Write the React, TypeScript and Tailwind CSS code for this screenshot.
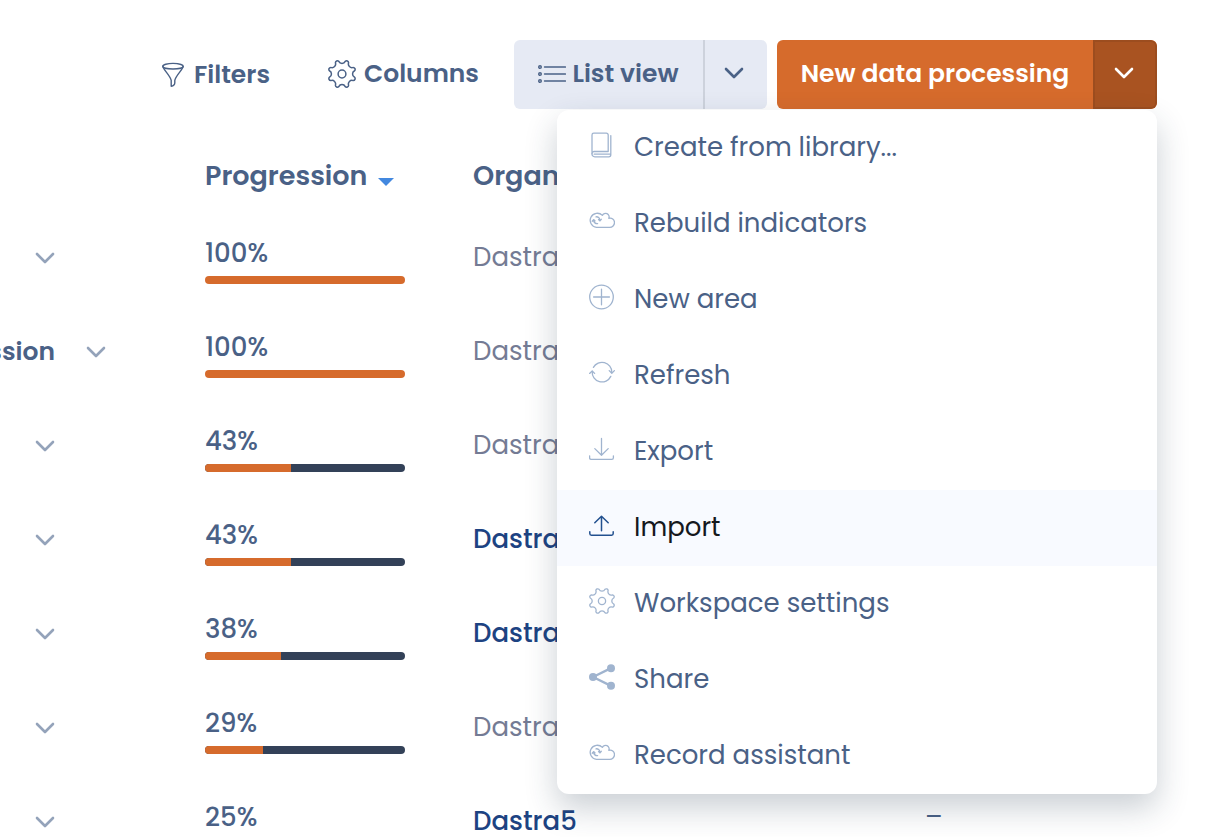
import React from "react";

type IconProps = { className?: string };

function gearOutline(center: number, radius: number, notch: number) {
  const point = (deg: number) => {
    const a = (deg * Math.PI) / 180;
    return `${(center + radius * Math.cos(a)).toFixed(2)} ${(center + radius * Math.sin(a)).toFixed(2)}`;
  };
  let d = "";
  for (let i = 0; i < 8; i++) {
    const a = 22.5 + i * 45;
    d += `${i === 0 ? "M" : "L"}${point(a - 8)} A2 2 0 0 1 ${point(a + 8)} A${notch} ${notch} 0 0 0 ${point(a + 37)} `;
  }
  return d + "Z";
}

const GEAR = gearOutline(14, 13, 3.6);

function Svg({ className = "", size = 26, box = "0 0 26 26", stroke = 1.3, children }: IconProps & { size?: number; box?: string; stroke?: number; children: React.ReactNode }) {
  return (
    <svg className={`shrink-0 ${className}`} width={size} height={size} viewBox={box} fill="none" stroke="currentColor" strokeWidth={stroke} strokeLinecap="round" strokeLinejoin="round" aria-hidden="true">
      {children}
    </svg>
  );
}

const FilterIcon = () => (
  <Svg stroke={1.4}>
    <ellipse cx="13" cy="4.2" rx="10.2" ry="2.8" />
    <path d="M2.8 4.4C3.2 7.6 10.2 13.4 11.2 18.4V24.2C13 24 14.8 22.6 14.8 20.8V18.4C15.8 13.4 22.8 7.6 23.2 4.4" />
  </Svg>
);
const GearIcon = ({ stroke = 1.4, size = 26 }: { stroke?: number; size?: number }) => (
  <Svg box="0 0 28 28" stroke={stroke} size={size}>
    <path d={GEAR} />
    <circle cx="14" cy="14" r="3.9" />
  </Svg>
);
const ListIcon = () => (
  <Svg size={28} box="0 0 28 28" stroke={1.4}>
    <circle cx="2" cy="7" r="1.3" />
    <circle cx="2" cy="14" r="1.3" />
    <circle cx="2" cy="21" r="1.3" />
    <path d="M6.5 7H27.4M6.5 14H27.4M6.5 21H27.4" />
  </Svg>
);
const ChevronIcon = ({ className = "" }: IconProps) => (
  <Svg className={className} size={20} box="0 0 20 20" stroke={2.6}>
    <path d="M2 6L10 14L18 6" />
  </Svg>
);
const BookIcon = () => (
  <Svg>
    <path d="M19.2 19.5H5.2A2.2 2.2 0 0 0 3 21.7V3A1.8 1.8 0 0 1 4.8 1.2H17.4A1.8 1.8 0 0 1 19.2 3Z" />
    <path d="M3 21.7A2.8 2.8 0 0 0 5.8 24.8H19.8A2 2 0 0 0 21.8 22.8V3.6M5.2 22.2H21.4" />
  </Svg>
);
const CloudIcon = () => (
  <Svg>
    <path d="M7.5 19.4A7.1 7.1 0 1 1 13.4 7.4A3.4 3.4 0 1 1 19.8 10.3C22.8 9.4 25.5 11.8 25.5 14.6A4.8 4.8 0 0 1 20.7 19.4Z" />
    <path d="M4.6 12.4A3.5 3.5 0 0 0 8.6 15.6M10.9 12A3.5 3.5 0 0 0 7 8.8M3.2 13.2L4.6 11.6L6.1 12.9M9.5 11.6L11 12.9L12.3 11.3" />
  </Svg>
);
const PlusIcon = () => (
  <Svg>
    <circle cx="12.5" cy="13" r="11.8" />
    <path d="M12.5 5.2V20.8M4.6 13H20.4" />
  </Svg>
);
const RefreshIcon = () => (
  <Svg>
    <path d="M4.4 7.4A9.8 9.8 0 0 1 22.8 12.2M21.8 16.4A9.8 9.8 0 0 1 3.2 11.4" />
    <path d="M20.2 10.6L22.8 13.2L25.4 10.6M.6 13.4L3.2 11L5.6 13.4" />
  </Svg>
);
const ExportIcon = () => (
  <Svg>
    <path d="M12.5 2.4V19M5.8 12.6L12.5 19.2L19.2 12.6M.6 19.8V21.8A1.6 1.6 0 0 0 2.2 23.4H22.8A1.6 1.6 0 0 0 24.4 21.8V19.8" />
  </Svg>
);
const ImportIcon = () => (
  <Svg stroke={1.5}>
    <path d="M12.5 18.8V4.4M5.8 10.8L12.5 4.2L19.2 10.8M.8 19.8V21.6A1.6 1.6 0 0 0 2.4 23.2H22.6A1.6 1.6 0 0 0 24.2 21.6V19.8" />
  </Svg>
);
const ShareIcon = () => (
  <Svg stroke={2.4}>
    <path d="M4 13L22 4.2M4 13L22 21.8" />
    <g fill="currentColor" stroke="none">
      <circle cx="4" cy="13" r="4" />
      <circle cx="22" cy="4.2" r="4" />
      <circle cx="22" cy="21.8" r="4" />
    </g>
  </Svg>
);

const menu: { label: string; icon: React.ReactNode; active?: boolean }[] = [
  { label: "Create from library...", icon: <BookIcon /> },
  { label: "Rebuild indicators", icon: <CloudIcon /> },
  { label: "New area", icon: <PlusIcon /> },
  { label: "Refresh", icon: <RefreshIcon /> },
  { label: "Export", icon: <ExportIcon /> },
  { label: "Import", icon: <ImportIcon />, active: true },
  { label: "Workspace settings", icon: <GearIcon /> },
  { label: "Share", icon: <ShareIcon /> },
  { label: "Record assistant", icon: <CloudIcon /> },
];

const rows: { name?: string; progress: number; org: string; linked?: boolean; last?: string }[] = [
  { progress: 100, org: "Dastra" },
  { name: "ssion", progress: 100, org: "Dastra" },
  { progress: 43, org: "Dastra" },
  { progress: 43, org: "Dastra5", linked: true },
  { progress: 38, org: "Dastra5", linked: true },
  { progress: 29, org: "Dastra" },
  { progress: 25, org: "Dastra5", linked: true, last: "–" },
];

function Toolbar() {
  return (
    <div className="relative z-10 flex h-[69px] items-stretch justify-end text-[25px] font-semibold">
      <button type="button" className="mr-[50px] flex w-[118px] items-center gap-2 whitespace-nowrap">
        <FilterIcon />
        Filters
      </button>
      <button type="button" className="mr-[28px] flex w-[158px] items-center gap-2 whitespace-nowrap pb-0.5">
        <GearIcon size={28} stroke={1.5} />
        Columns
      </button>
      <div className="mr-2.5 flex overflow-hidden rounded-md bg-[#e6eaf4]">
        <button type="button" className="flex w-[191px] items-center justify-center gap-1.5 whitespace-nowrap border-r-2 border-[#cdd2dc] pb-0.5">
          <ListIcon />
          List view
        </button>
        <button type="button" aria-label="View options" className="flex w-[62px] items-center justify-center pr-1 pb-1">
          <ChevronIcon />
        </button>
      </div>
      <div className="flex overflow-hidden rounded-md bg-[#d66b2c] text-white">
        <button type="button" className="w-[316px] whitespace-nowrap pb-0.5 text-center">New data processing</button>
        <button type="button" aria-label="More actions" aria-expanded="true" className="flex w-16 items-center justify-center rounded-r-md border-2 border-[#9c4d1f] bg-[#a95321] pr-0.5 pb-1">
          <ChevronIcon />
        </button>
      </div>
      <div role="menu" className="absolute top-full right-0 mt-px w-[600px] overflow-hidden rounded-[12px] bg-white text-[26px] font-normal shadow-[0_14px_32px_rgba(35,55,75,0.24)]">
        {menu.map((item) => (
          <button
            key={item.label}
            type="button"
            role="menuitem"
            className={`flex h-[76px] w-full items-center gap-[19px] px-8 pb-0.5 text-left ${item.active ? "bg-[#f8faff] text-[#15181d]" : ""}`}
          >
            <span className={`pb-1 ${item.active ? "text-[#22508f]" : "text-[#a0b4cf]"}`}>{item.icon}</span>
            {item.label}
          </button>
        ))}
      </div>
    </div>
  );
}

export default function App() {
  return (
    <main className="h-screen overflow-hidden bg-white pt-10 font-['Poppins','Inter',sans-serif] text-[26px] leading-[34px] text-[#4a6186]">
      <div className="pr-16">
        <Toolbar />
      </div>
      <table className="mt-8 w-full table-fixed border-collapse text-left">
        <colgroup>
          <col className="w-[205px]" />
          <col className="w-[268px]" />
          <col className="w-[452px]" />
          <col />
        </colgroup>
        <thead>
          <tr className="h-[70px] text-[27px]">
            <th aria-label="Name" />
            <th className="p-0 font-semibold">
              <span className="flex items-center gap-[11px]">
                Progression
                <svg className="mt-3" width="16" height="8" viewBox="0 0 16 8" fill="#4388df" aria-hidden="true">
                  <path d="M0 0H16L8 8Z" />
                </svg>
              </span>
            </th>
            <th className="p-0 font-semibold">Organization</th>
            <th aria-label="Details" />
          </tr>
        </thead>
        <tbody>
          {rows.map((row, i) => (
            <tr key={i} className="h-[94px]">
              <td className="p-0">
                <div className={`flex items-center justify-end gap-[31px] ${row.name ? "pr-[99px]" : "pr-[150px]"}`}>
                  {row.name && <span className="text-[25px] font-semibold">{row.name}</span>}
                  <button type="button" aria-label="Expand row" className="text-[#94a3ba]">
                    <ChevronIcon />
                  </button>
                </div>
              </td>
              <td className="p-0 pt-[25px] align-top font-medium">
                {row.progress}%
                <div className="mt-1.5 h-2 w-[200px] overflow-hidden rounded-full bg-[#334158]">
                  <div className="h-full bg-[#d66b2c]" style={{ width: `${row.progress}%` }} />
                </div>
              </td>
              <td className={`p-0 pb-0.5 ${row.linked ? "font-medium text-[#1d4382]" : "text-[#747b94]"}`}>
                {row.linked ? <a href="#organization">{row.org}</a> : row.org}
              </td>
              <td className="p-0 pb-2.5">{row.last}</td>
            </tr>
          ))}
        </tbody>
      </table>
    </main>
  );
}
